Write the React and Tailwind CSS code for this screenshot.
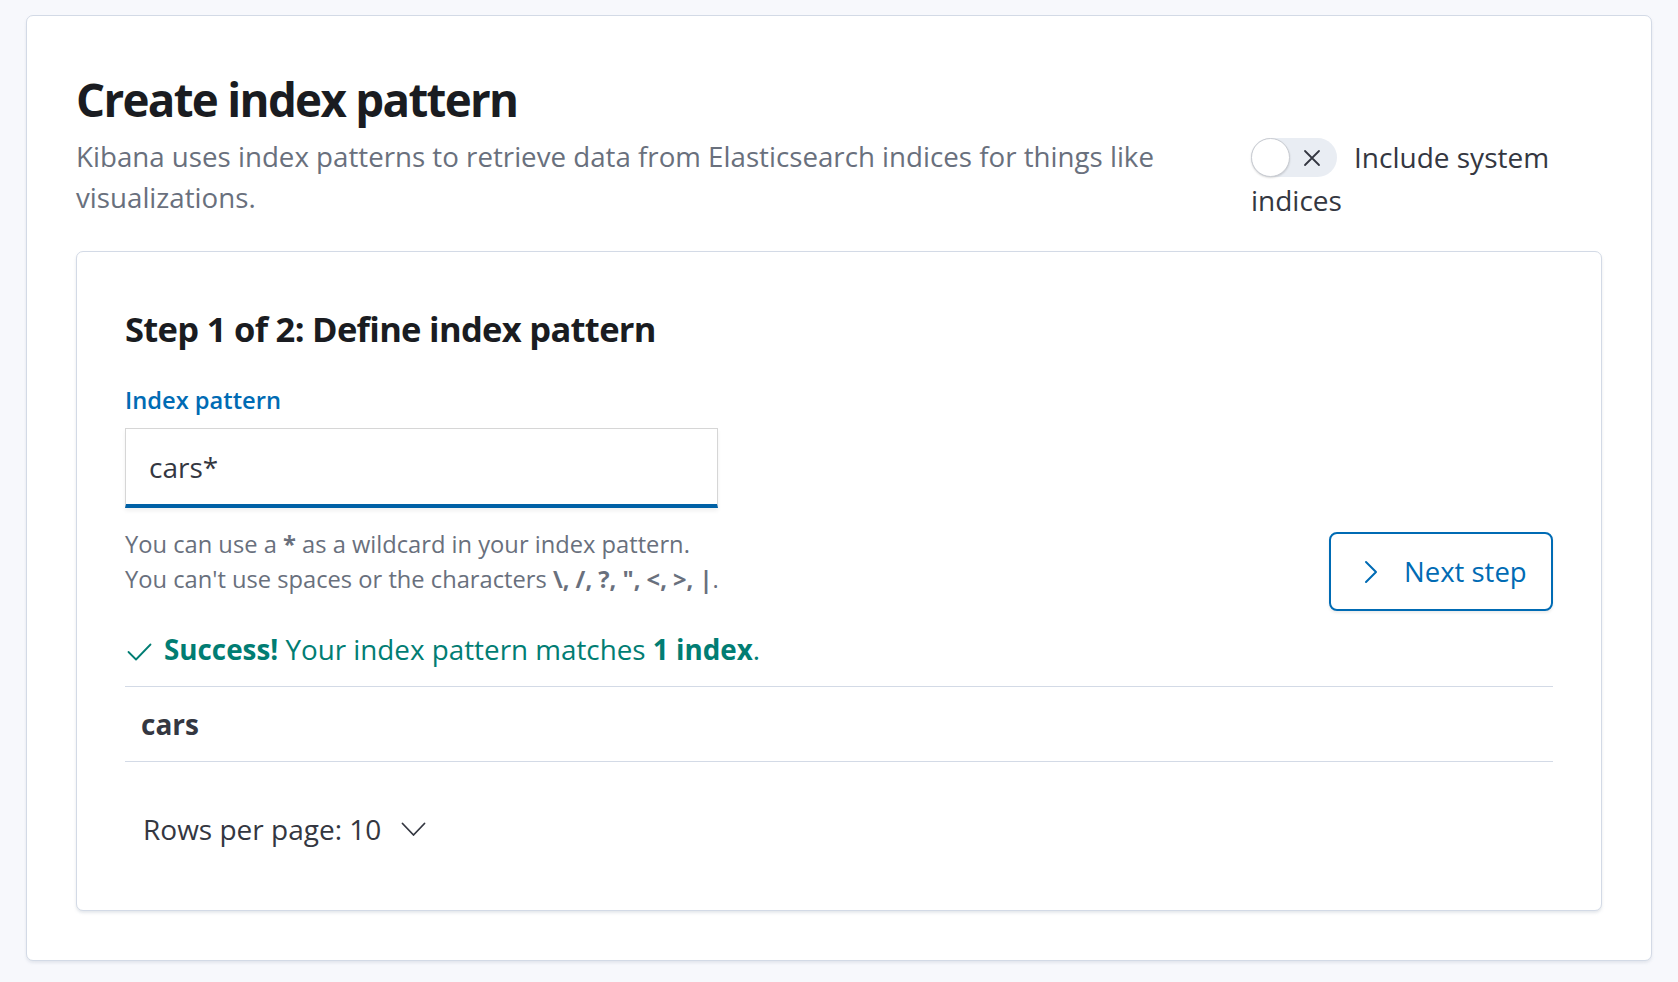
import React from "react";

function XIcon() {
  return (
    <svg width="20" height="20" viewBox="0 0 20 20" fill="none" stroke="#343741" strokeWidth="1.8" strokeLinecap="round">
      <path d="M3 3 L17 17 M17 3 L3 17" />
    </svg>
  );
}

export default function App() {
  return (
    <div className="min-h-screen bg-[#f7f8fc] pt-[15px] px-[26px] pb-[23px] font-['Open_Sans',sans-serif] text-[#343741]">
      <div className="rounded-[7px] border border-[#d3dae6] bg-white shadow-[0_2px_3px_rgba(152,162,179,0.2)] px-[49px] pt-[57px] pb-[49px]">
        {/* header */}
        <div className="flex items-start gap-[46px]">
          <div className="flex-1">
            <h1 className="text-[45.7px] leading-[52px] font-bold tracking-[-0.037em] text-[#1a1c21]">
              Create index pattern
            </h1>
            <p className="mt-[11px] text-[27.7px] leading-[41px] text-[#69707d]">
              Kibana uses index patterns to retrieve data from Elasticsearch indices for things like visualizations.
            </p>
          </div>
          <div className="w-[351px] mt-[64px] text-[28px] leading-[41px] text-[#343741]">
            <span className="inline-flex align-middle mr-[17px] relative top-[-3px] w-[86px] h-[39px] rounded-full bg-[#e9edf3]">
              <span className="absolute left-0 top-0 w-[39px] h-[39px] rounded-full bg-white border border-[#c9ccd2] shadow-[0_1px_2px_rgba(0,0,0,0.15)]" />
              <span className="absolute left-[51px] top-[10px]">
                <XIcon />
              </span>
            </span>
            Include system indices
          </div>
        </div>

        {/* inner panel */}
        <div className="mt-[30px] rounded-[7px] border border-[#d3dae6] bg-white shadow-[0_2px_3px_rgba(152,162,179,0.25)] px-[48px] pt-[57px] pb-[61px]">
          <h2 className="text-[34.5px] leading-[40px] font-bold tracking-[-0.02em] text-[#1a1c21]">
            Step 1 of 2: Define index pattern
          </h2>

          <div className="mt-[35px] flex items-start justify-between">
            <div className="w-[593px]">
              <label className="block text-[23.7px] leading-[32px] font-semibold text-[#006bb4]">
                Index pattern
              </label>
              <div className="mt-[12px] h-[80px] border border-[#d6d6d6] border-b-[4px] border-b-[#0061a6] bg-white shadow-[0_3px_4px_rgba(0,0,0,0.06)] flex items-center px-[23px] text-[28px] text-[#343741]">
                cars*
              </div>
              <div className="mt-[19px] text-[23.7px] leading-[35px] text-[#69707d] whitespace-nowrap">
                <div>
                  You can use a <b className="font-bold">*</b> as a wildcard in your index pattern.
                </div>
                <div>
                  You can't use spaces or the characters <b className="font-bold">\, /, ?, ", &lt;, &gt;, |</b>.
                </div>
              </div>
            </div>
            <button className="mt-[148px] w-[224px] h-[79px] rounded-[8px] border-2 border-[#006bb4] bg-white shadow-[0_2px_3px_rgba(0,0,0,0.08)] flex items-center pl-[32px] gap-[25px] text-[27.5px] text-[#006bb4]">
              <svg width="16" height="26" viewBox="0 0 16 26" fill="none" stroke="#006bb4" strokeWidth="2" strokeLinecap="round" strokeLinejoin="round">
                <path d="M3 3 L13 13 L3 23" />
              </svg>
              <span>Next step</span>
            </button>
          </div>

          <div className="mt-[18px] flex items-center text-[27.8px] leading-[40px] text-[#017d73]">
            <svg className="ml-[2px] mr-[12px] mt-[6px]" width="25" height="18" viewBox="0 0 25 18" fill="none" stroke="#017d73" strokeWidth="1.8" strokeLinecap="round" strokeLinejoin="round">
              <path d="M1.5 9 L9 16.5 L23.5 1.5" />
            </svg>
            <span>
              <b className="font-bold">Success!</b> Your index pattern matches <b className="font-bold">1 index</b>.
            </span>
          </div>

          <div className="mt-[17px] border-t border-b border-[#d3dae6] h-[76px] flex items-center px-[16px] text-[28px] font-bold text-[#343741]">
            cars
          </div>

          <div className="mt-[47px] flex items-center px-[18px] text-[28px] leading-[40px] text-[#343741]">
            <span>Rows per page: 10</span>
            <svg className="ml-[20px]" width="25" height="15" viewBox="0 0 25 15" fill="none" stroke="#343741" strokeWidth="1.8" strokeLinecap="round" strokeLinejoin="round">
              <path d="M1.5 1.5 L12.5 13 L23.5 1.5" />
            </svg>
          </div>
        </div>
      </div>
    </div>
  );
}
